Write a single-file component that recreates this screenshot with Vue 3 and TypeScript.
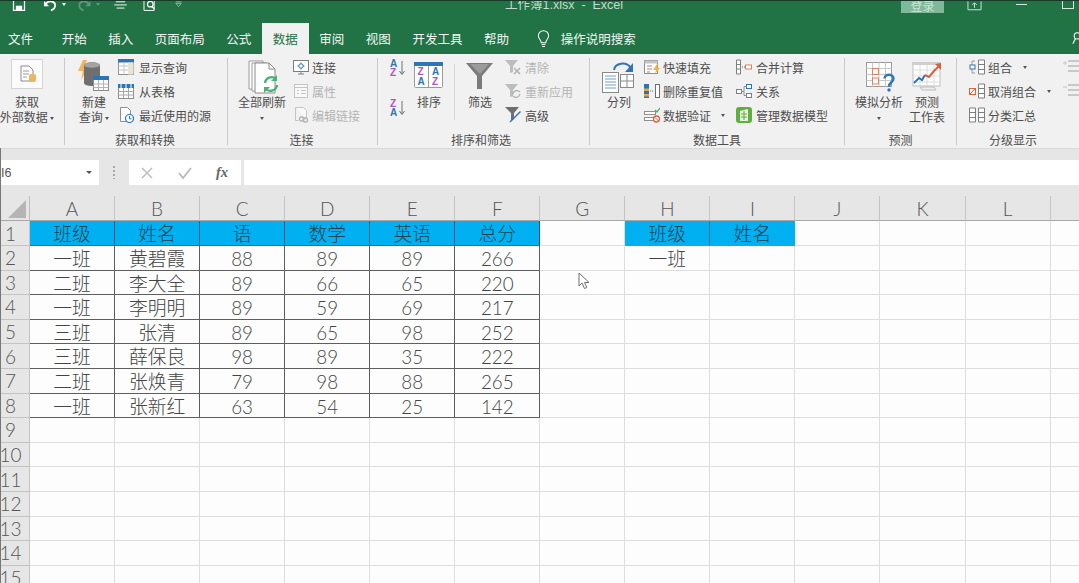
<script setup lang="ts">
const tabs = ['开始', '插入', '页面布局', '公式', '数据', '审阅', '视图', '开发工具', '帮助']
const cols = ['A', 'B', 'C', 'D', 'E', 'F', 'G', 'H', 'I', 'J', 'K', 'L', '']

const table: (string | number)[][] = [
  ['班级', '姓名', '语', '数学', '英语', '总分'],
  ['一班', '黄碧霞', 88, 89, 89, 266],
  ['二班', '李大全', 89, 66, 65, 220],
  ['一班', '李明明', 89, 59, 69, 217],
  ['三班', '张清', 89, 65, 98, 252],
  ['三班', '薛保良', 98, 89, 35, 222],
  ['二班', '张焕青', 79, 98, 88, 265],
  ['一班', '张新红', 63, 54, 25, 142],
]

interface Cell { text: string | number; cls: string }

function makeRow(r: number): Cell[] {
  const out: Cell[] = []
  for (let c = 0; c < 13; c++) {
    let text: string | number = ''
    const cls: string[] = []
    if (r < table.length && c < 6) {
      text = table[r][c]
      cls.push('dark')
      if (r === 0) cls.push('blue')
    }
    if (r === 0 && (c === 7 || c === 8)) {
      text = c === 7 ? '班级' : '姓名'
      cls.push('blue')
      if (c === 7) cls.push('blue-split')
    }
    if (r === 1 && c === 7) text = '一班'
    out.push({ text, cls: cls.join(' ') })
  }
  return out
}

const rows = Array.from({ length: 15 }, (_, i) => ({ n: i + 1, cells: makeRow(i) }))
</script>

<template>
  <div class="app">
    <header class="titlebar">
      <div class="qat">
        <svg class="q q-save" viewBox="0 0 16 14"><path d="M1 -3h11l3 3v12H1z" fill="none" stroke="#fff" stroke-width="1.6"/><rect x="4" y="6" width="8" height="6" fill="#fff"/></svg>
        <svg class="q q-undo" viewBox="0 0 16 14"><path d="M3 3c4-4 11-3 11 2 0 3-2 5-5 6" fill="none" stroke="#fff" stroke-width="2"/><path d="M1 0v6h6z" fill="#fff"/></svg>
        <span class="caret caret-w"></span>
        <svg class="q q-redo" viewBox="0 0 16 14"><path d="M13 3C9-1 2 0 2 5c0 3 2 5 5 6" fill="none" stroke="#5c9a7a" stroke-width="2"/><path d="M15 0v6H9z" fill="#5c9a7a"/></svg>
        <span class="caret caret-dim"></span>
        <svg class="q q-list" viewBox="0 0 16 14"><path d="M2 1h12M0 5h16M3 9h10" stroke="#fff" stroke-width="1.2"/></svg>
        <svg class="q q-prev" viewBox="0 0 16 14"><path d="M1-3v15h13V-3" fill="none" stroke="#fff" stroke-width="1.2"/><circle cx="9" cy="4" r="3.6" fill="none" stroke="#fff" stroke-width="1.6"/><path d="M11 7l3 3" stroke="#fff" stroke-width="1.8"/></svg>
        <svg class="q q-more" viewBox="0 0 10 10"><path d="M1 1h7" stroke="#9cc5ae"/><path d="M1 3h7L4.500 7z" fill="none" stroke="#9cc5ae"/></svg>
      </div>
      <div class="doc-title">工作簿1.xlsx&nbsp; - &nbsp;Excel</div>
      <div class="login">登录</div>
      <svg class="win win-ribbon" viewBox="0 0 16 10"><path d="M1 0v9h14V0" fill="none" stroke="#d5e6dc"/><path d="M8 7V2M5.500 4L8 1.500 10.500 4" fill="none" stroke="#d5e6dc"/></svg>
      <span class="win-min"></span>
      <span class="win-max"></span>
    </header>

    <nav class="tabs">
      <span class="tab tab-file">文件</span>
      <span v-for="t in tabs" :key="t" class="tab" :class="{ active: t === '数据' }">{{ t }}</span>
      <svg class="bulb" viewBox="0 0 14 18"><path d="M4.500 13c0-3-3-4-3-7.500a5.500 5.500 0 0 1 11 0C12.500 9 9.500 10 9.500 13z" fill="none" stroke="#fff" stroke-width="1.100"/><path d="M5 15h4M5.500 17h3" stroke="#fff" stroke-width="1.100"/></svg>
      <span class="tell">操作说明搜索</span>
      <svg class="person" viewBox="0 0 8 16"><circle cx="6" cy="5" r="3.500" fill="none" stroke="#fff" stroke-width="1.200"/><path d="M4 8l-3 6" stroke="#fff" stroke-width="1.200"/></svg>
    </nav>

    <section class="ribbon">
      <div class="group g1">
        <div class="body">
          <div class="big w54">
            <div class="big-ic">
              <svg viewBox="0 0 36 36"><rect x="2.500" y="1.500" width="31" height="29" fill="#fbfbfb" stroke="#d4d4d4"/><path d="M12 8h8l4 4v11H12z" fill="#fff" stroke="#8a8a8a"/><path d="M14 13h6M14 16h6M14 19h4" stroke="#9a9a9a"/><rect x="20" y="16" width="7" height="8" rx="2" fill="#eab662"/></svg>
            </div>
            <span>获取</span>
            <span>外部数据 <i class="caret"></i></span>
          </div>
        </div>
        <div class="label">&nbsp;</div>
      </div>
      <div class="sep"></div>

      <div class="group g2">
        <div class="body">
          <div class="big w46 ml6">
            <div class="big-ic">
              <svg viewBox="0 0 36 36"><path d="M7 2L2 13h5l-2 9 8-13H8l3-7z" fill="#efb45c"/><path d="M8 8c0-5 16-5 16 0v17c0 4-16 4-16 0z" fill="#6f6f6f"/><ellipse cx="16" cy="7" rx="8" ry="2.800" fill="#a3a3a3"/><rect x="17.500" y="18.500" width="15" height="14" fill="#fff" stroke="#8a8a8a"/><rect x="17" y="18" width="16" height="4" fill="#2e75b6"/><path d="M17.500 26h15M17.500 29.500h15M22.500 22v10M27.500 22v10" stroke="#b4b4b4"/></svg>
            </div>
            <span>新建</span>
            <span>查询 <i class="caret"></i></span>
          </div>
          <div class="col ml1">
            <div class="row gap5">
              <svg class="ic" viewBox="0 0 16 16"><rect x=".5" y=".5" width="15" height="15" fill="#fff" stroke="#8f8f8f"/><rect x="0" y="0" width="16" height="3.500" fill="#2e75b6"/><path d="M.5 7h15M.5 11h15M6 3.500v12" stroke="#c4c4c4"/><rect x="10" y="3.500" width="5.500" height="12" fill="#e9e4d8"/></svg>
              <span>显示查询</span>
            </div>
            <div class="row gap5">
              <svg class="ic" viewBox="0 0 16 16"><rect x=".5" y="1.500" width="15" height="14" fill="#fff" stroke="#8f8f8f"/><rect x="0" y="1" width="16" height="4" fill="#2e75b6"/><path d="M.5 8.500h15M.5 12h15M5.500 5v10M10.500 5v10" stroke="#a8a8a8"/><path d="M3 1v4M8 1v4M13 1v4" stroke="#fff"/></svg>
              <span>从表格</span>
            </div>
            <div class="row gap5">
              <svg class="ic" viewBox="0 0 16 16"><path d="M2.500.5h7l3 3v11h-10z" fill="#fff" stroke="#8f8f8f"/><circle cx="11.500" cy="11.500" r="4" fill="#fff" stroke="#2e75b6" stroke-width="1.200"/><path d="M11.500 9v2.800h2" fill="none" stroke="#2e75b6"/></svg>
              <span>最近使用的源</span>
            </div>
          </div>
        </div>
        <div class="label pr2">获取和转换</div>
      </div>
      <div class="sep"></div>

      <div class="group g3">
        <div class="body">
          <div class="big w50 ml9">
            <div class="big-ic">
              <svg viewBox="0 0 36 36"><path d="M5 3h14v28H5z" fill="#fff" stroke="#9a9a9a"/><path d="M8 5h14v28H8z" fill="#fff" stroke="#9a9a9a"/><path d="M11 5h14l6 6v24H11z" fill="#fff" stroke="#8a8a8a"/><path d="M25 5v6h6" fill="none" stroke="#8a8a8a"/><path d="M21 25a6.500 6.500 0 0 1 11-4" fill="none" stroke="#4caf78" stroke-width="2.400"/><path d="M33 17v6h-6z" fill="#4caf78"/><path d="M33 27a6.500 6.500 0 0 1-11 4" fill="none" stroke="#4caf78" stroke-width="2.400"/><path d="M20 35v-6h6z" fill="#4caf78"/></svg>
            </div>
            <span>全部刷新</span>
            <span><i class="caret"></i></span>
          </div>
          <div class="col ml6">
            <div class="row gap3">
              <svg class="ic" viewBox="0 0 16 16"><rect x=".5" y="1.500" width="15" height="11" fill="#fff" stroke="#7f7f7f"/><path d="M5 15h6M8 12.500V15" stroke="#7f7f7f"/><circle cx="8" cy="7" r="2.200" fill="#fff" stroke="#2e75b6"/><path d="M8 3.500v1.300M8 9.200v1.300M4.500 7h1.300M10.200 7h1.300" stroke="#2e75b6"/></svg>
              <span>连接</span>
            </div>
            <div class="row gap3 off">
              <svg class="ic" viewBox="0 0 16 16"><rect x="1.500" y="1.500" width="13" height="13" fill="#f8f8f8" stroke="#c4c4c4"/><path d="M1.500 4.500h13M4 7.500h2M8 7.500h5M4 10.500h2M8 10.500h5" stroke="#c4c4c4"/></svg>
              <span>属性</span>
            </div>
            <div class="row gap3 off">
              <svg class="ic" viewBox="0 0 16 16"><path d="M2.500.5h8l3 3v8" fill="#f8f8f8" stroke="#c4c4c4"/><path d="M2.500.5v13h3" fill="none" stroke="#c4c4c4"/><rect x="6.500" y="10" width="4.500" height="4" rx="2" fill="none" stroke="#b4b4b4" stroke-width="1.300"/><rect x="10" y="11" width="4.500" height="4" rx="2" fill="none" stroke="#b4b4b4" stroke-width="1.300"/></svg>
              <span>编辑链接</span>
            </div>
          </div>
        </div>
        <div class="label pr2">连接</div>
      </div>
      <div class="sep"></div>

      <div class="group g4">
        <div class="body">
          <div class="sort">
            <svg class="sort-ic" viewBox="0 0 16 20"><text x="0" y="9" class="az blue-t">A</text><text x="0" y="18" class="az purple-t">Z</text><path d="M12 3v13M9.500 13l2.500 3.500 2.500-3.500" fill="none" stroke="#707070"/></svg>
            <svg class="sort-ic" viewBox="0 0 16 20"><text x="0" y="9" class="az purple-t">Z</text><text x="0" y="18" class="az blue-t">A</text><path d="M12 3v13M9.500 13l2.500 3.500 2.500-3.500" fill="none" stroke="#707070"/></svg>
          </div>
          <div class="big w30 ml8">
            <div class="big-ic">
              <svg viewBox="0 0 30 36"><rect x=".5" y="4.500" width="28" height="25" rx="1" fill="#fff" stroke="#9a9a9a"/><rect x="0" y="4" width="29" height="4" fill="#2e75b6"/><path d="M14.500 8v21" stroke="#9a9a9a"/><text x="3.500" y="17" class="az2 purple-t">Z</text><text x="3.500" y="27" class="az2 blue-t">A</text><text x="18" y="17" class="az2 blue-t">A</text><text x="18" y="27" class="az2 purple-t">Z</text></svg>
            </div>
            <span>排序</span>
          </div>
          <div class="vline"></div>
          <div class="big w30 ml10">
            <div class="big-ic">
              <svg viewBox="0 0 30 36"><path d="M1 5h27L17 18v13l-5 0V18z" fill="#7b7b7b"/><path d="M5 6h19l-9 10z" fill="#9b9b9b"/></svg>
            </div>
            <span>筛选</span>
          </div>
          <div class="col ml10">
            <div class="row gap3 off">
              <svg class="ic w17" viewBox="0 0 17 16"><path d="M0 1h13L8 7v6l-3 1V7z" fill="#bdbdbd"/><path d="M9 9l6 6M15 9l-6 6" stroke="#b0b0b0" stroke-width="1.500"/></svg>
              <span>清除</span>
            </div>
            <div class="row gap3 off">
              <svg class="ic w17" viewBox="0 0 17 16"><path d="M0 1h13L8 7v6l-3 1V7z" fill="#bdbdbd"/><path d="M8 11a4 4 0 0 1 7-2M15 11a4 4 0 0 1-7 2" fill="none" stroke="#b0b0b0" stroke-width="1.300"/></svg>
              <span>重新应用</span>
            </div>
            <div class="row gap3">
              <svg class="ic w17" viewBox="0 0 17 16"><path d="M0 0h14L9 6v6L6 14V6z" fill="#6f6f6f"/><path d="M16 5L6 15l-1.500.500L5 14 15 4z" fill="#2e75b6"/></svg>
              <span>高级</span>
            </div>
          </div>
        </div>
        <div class="label pr5">排序和筛选</div>
      </div>
      <div class="sep"></div>

      <div class="group g5">
        <div class="body">
          <div class="big w34 ml12">
            <div class="big-ic">
              <svg viewBox="0 0 34 36"><rect x=".5" y="14.500" width="16" height="20" fill="#fff" stroke="#8a8a8a"/><path d="M3 18h11M3 21h11M3 24h11M3 27h11M3 30h11" stroke="#6f9fd0"/><rect x="18.500" y="16.500" width="13" height="13" fill="#fff" stroke="#8a8a8a"/><path d="M18.500 23h13M25 16.500v13" stroke="#8a8a8a"/><path d="M12 12c1-7 12-9 17-2" fill="none" stroke="#2e75b6" stroke-width="2"/><path d="M31 5v9h-8z" fill="#2e75b6"/></svg>
            </div>
            <span>分列</span>
          </div>
          <div class="col w92 ml8">
            <div class="row gap3">
              <svg class="ic" viewBox="0 0 16 16"><rect x=".5" y="1.500" width="13" height="13" fill="#fff" stroke="#8f8f8f"/><rect x=".5" y="1.500" width="13" height="3" fill="#c4c4c4"/><path d="M3 7h5M3 10h5M3 13h3" stroke="#a88" /><path d="M13 5l-4 6h3l-1 4 5-6h-3l1-4z" fill="#f0b44c"/></svg>
              <span>快速填充</span>
            </div>
            <div class="row gap3">
              <svg class="ic" viewBox="0 0 16 16"><rect x="0" y="1" width="5" height="14" fill="#2e75b6"/><rect x="0" y="5.500" width="5" height="2.500" fill="#e8a33d"/><rect x="0" y="11" width="5" height="2.500" fill="#e8a33d"/><rect x="11.500" y="1.500" width="4" height="13" fill="#fff" stroke="#6f6f6f"/><path d="M6 8h4" stroke="#2e75b6" stroke-dasharray="1 1"/></svg>
              <span>删除重复值</span>
            </div>
            <div class="row gap3">
              <svg class="ic" viewBox="0 0 16 16"><rect x=".5" y="4.500" width="11" height="3" fill="#fff" stroke="#8f8f8f"/><rect x=".5" y="10.500" width="9" height="3" fill="#fff" stroke="#8f8f8f"/><path d="M11 3l2 2 3-4" fill="none" stroke="#4caf78" stroke-width="1.300"/><circle cx="12.500" cy="12" r="3" fill="#fff" stroke="#e0603c" stroke-width="1.300"/><path d="M10.500 10l4 4" stroke="#e0603c"/></svg>
              <span>数据验证</span><i class="caret ml7"></i>
            </div>
          </div>
          <div class="col">
            <div class="row gap4">
              <svg class="ic" viewBox="0 0 16 16"><path d="M.5 1h4v14h-4zM.5 5.500h4M.5 10h4" fill="#fff" stroke="#7f7f7f"/><rect x="9.500" y="6" width="6" height="4" fill="#fff" stroke="#e0805c"/><path d="M6 8h3" stroke="#2e75b6" stroke-dasharray="1 1"/></svg>
              <span>合并计算</span>
            </div>
            <div class="row gap4">
              <svg class="ic" viewBox="0 0 16 16"><rect x=".5" y="6.500" width="5" height="4" fill="#fff" stroke="#7f7f7f"/><rect x="10.500" y="1.500" width="5" height="4" fill="#fff" stroke="#2e75b6"/><rect x="10.500" y="10.500" width="5" height="4" fill="#fff" stroke="#7f7f7f"/><path d="M5.500 8.500H8V3.500h2.500M8 8.500v4h2.500" fill="none" stroke="#8f8f8f"/></svg>
              <span>关系</span>
            </div>
            <div class="row gap4">
              <svg class="ic" viewBox="0 0 16 16"><rect x="0" y="0" width="16" height="16" rx="3" fill="#5faf3c"/><path d="M4 4l8-2v12H4z" fill="#e8f2de"/><path d="M5 7h6M5 10h6M8 4v9" stroke="#5faf3c"/></svg>
              <span>管理数据模型</span>
            </div>
          </div>
        </div>
        <div class="label">数据工具</div>
      </div>
      <div class="sep"></div>

      <div class="group g6">
        <div class="body">
          <div class="big w50 ml9">
            <div class="big-ic">
              <svg viewBox="0 0 36 36"><rect x="5.500" y="4.500" width="25" height="24" fill="#fff" stroke="#9a9a9a"/><path d="M5.500 10.500h25M5.500 16.500h25M5.500 22.500h25M11.500 4.500v24M18 4.500v24M24.500 4.500v24" stroke="#c8c8c8"/><rect x="11.500" y="10.500" width="6" height="6" fill="#fff" stroke="#e0805c"/><rect x="11.500" y="20" width="6" height="6" fill="#fff" stroke="#e0805c"/><path d="M23.500 20.500c0-5 9-5 9 0 0 4-4.500 3.500-4.500 8" fill="none" stroke="#2e75b6" stroke-width="2.400"/><circle cx="28" cy="32" r="1.700" fill="#2e75b6"/></svg>
            </div>
            <span>模拟分析</span>
            <span><i class="caret"></i></span>
          </div>
          <div class="big w38 ml4">
            <div class="big-ic">
              <svg viewBox="0 0 38 36"><rect x="5" y="5" width="27" height="23" fill="#fff" stroke="#bdbdbd"/><rect x="4" y="4" width="29" height="3" fill="#cfcfcf"/><path d="M5 12h27M5 18h27M5 24h27M12 7v21M19 7v21M26 7v21" stroke="#dcdcdc"/><path d="M6 25l5-5 3 2 3-5" fill="none" stroke="#2e75b6" stroke-width="2"/><path d="M17 17l4 2 5-6 5-5" fill="none" stroke="#d9603c" stroke-width="2"/><path d="M33 5v7l-6-6z" fill="#d9603c"/><path d="M12 29h14l2 3H14z" fill="#eee" stroke="#bdbdbd"/></svg>
            </div>
            <span>预测</span>
            <span>工作表</span>
          </div>
        </div>
        <div class="label">预测</div>
      </div>
      <div class="sep"></div>

      <div class="group g7">
        <div class="body">
          <div class="col outline ml12">
            <div class="row gap3">
              <svg class="ic" viewBox="0 0 16 16"><path d="M9.500 1h6v14h-6zM9.500 5.500h6M9.500 10.500h6" fill="#fff" stroke="#7f7f7f"/><path d="M3 2h3M3 14h3M3 2v12" fill="none" stroke="#9a9a9a"/><rect x="1" y="6" width="5" height="4" fill="#fff" stroke="#2e75b6"/></svg>
              <span>组合</span><i class="caret ml8"></i>
            </div>
            <div class="row gap3">
              <svg class="ic" viewBox="0 0 16 16"><path d="M9.500 1h6v14h-6zM9.500 5.500h6M9.500 10.500h6" fill="#fff" stroke="#7f7f7f"/><rect x=".5" y="5.500" width="6" height="6" fill="#fff" stroke="#e0603c"/><path d="M1 11l5-5" stroke="#e0603c"/></svg>
              <span>取消组合</span><i class="caret ml8"></i>
            </div>
            <div class="row gap3">
              <svg class="ic" viewBox="0 0 16 16"><path d="M.5 1h6v14h-6zM.5 5.500h6M.5 10.500h6M9.500 1h6v14h-6zM9.500 5.500h6M9.500 10.500h6" fill="#fff" stroke="#7f7f7f"/></svg>
              <span>分类汇总</span>
            </div>
          </div>
          <div class="col side">
            <div class="row off">
              <svg class="ic" viewBox="0 0 17 16"><path d="M6 2h11M6 7h11M6 12h11" stroke="#c8c8c8" stroke-width="2"/><path d="M1 4h4M3 2v4" stroke="#c8c8c8"/></svg>
            </div>
            <div class="row off">
              <svg class="ic" viewBox="0 0 17 16"><path d="M6 2h11M6 7h11M6 12h11" stroke="#c8c8c8" stroke-width="2"/><path d="M1 4h4" stroke="#c8c8c8"/></svg>
            </div>
          </div>
        </div>
        <div class="label label-g7">分级显示</div>
      </div>
    </section>

    <div class="lower">
      <div class="fbar">
        <div class="namebox"><span>I6</span><i class="caret caret-dark"></i></div>
        <div class="grip"></div>
        <div class="fbtns">
          <svg class="fb" viewBox="0 0 14 14"><path d="M2 2l10 10M12 2L2 12" stroke="#b9b9b9" stroke-width="1.400"/></svg>
          <svg class="fb" viewBox="0 0 14 14"><path d="M1 7l4 5 8-10" fill="none" stroke="#b9b9b9" stroke-width="1.800"/></svg>
          <span class="fx">fx</span>
        </div>
        <div class="finput"></div>
      </div>

      <div class="sheet">
        <div class="corner"><span class="tri"></span></div>
        <div v-for="(c, i) in cols" :key="i" class="colhead">{{ c }}</div>
        <div v-for="r in rows" :key="r.n" class="sheet-row">
          <div class="rowhead"><span>{{ r.n }}</span></div>
          <div v-for="(cell, j) in r.cells" :key="j" class="cell" :class="cell.cls">{{ cell.text }}</div>
        </div>
        <svg class="cursor" viewBox="0 0 12 18"><path d="M1 1v13l3-3 2.500 5.500 2.300-1L6.500 10.500H11z" fill="#fff" stroke="#6f6f6f"/></svg>
      </div>
    </div>
  </div>
</template>

<style scoped>
.app {
  position: relative;
  width: 1079px;
  height: 583px;
  overflow: hidden;
  display: flex;
  flex-direction: column;
  background: #fdfdfd;
  font-family: "Noto Sans CJK SC", "Noto Sans", sans-serif;
  font-size: 12px;
  color: #4e4e4e;
}

.titlebar {
  height: 23px;
  flex: none;
  display: flex;
  align-items: flex-start;
  background: #217346;
  border-top: 1px solid #17392a;
  box-sizing: border-box;
  overflow: hidden;
}
.qat { width: 505px; flex: none; display: flex; align-items: flex-start; }
.q { display: block; height: 11px; flex: none; }
.q-save { width: 14px; margin-left: 12px; }
.q-undo { width: 16px; margin-left: 16px; height: 12px; }
.q-redo { width: 15px; margin-left: 11px; height: 12px; }
.q-list { width: 15px; margin-left: 13px; margin-top: 0; }
.q-prev { width: 15px; margin-left: 14px; }
.q-more { width: 8px; height: 8px; margin-left: 18px; }
.caret-w { border-top-color: #fff !important; margin: 2px 0 0 4px; }
.caret-dim { border-top-color: #5c9a7a !important; margin: 2px 0 0 4px; }
.doc-title {
  width: 396px;
  flex: none;
  line-height: 9px;
  font-family: "Liberation Sans", "Noto Sans CJK SC", sans-serif;
  font-size: 12.5px;
  color: #c5dccf;
  white-space: nowrap;
}
.login {
  width: 43px;
  height: 12px;
  flex: none;
  background: #80b89b;
  color: #cfe3d7;
  text-align: center;
  line-height: 9px;
  font-size: 12px;
}
.win-ribbon { width: 15px; height: 10px; margin-left: 23px; flex: none; }
.win-min { width: 11px; height: 1px; background: #d5e6dc; margin: 3px 0 0 34px; flex: none; }
.win-max { width: 10px; height: 7px; border: 1px solid #d5e6dc; border-top: 0; margin-left: 35px; flex: none; }

.tabs {
  height: 31px;
  flex: none;
  display: flex;
  align-items: stretch;
  background: #217346;
  color: #f2f7f4;
  font-size: 12.5px;
  position: relative;
}
.tab { display: flex; align-items: center; padding: 0 10.75px; white-space: nowrap; }
.tab-file { padding: 0 18px 0 8px; margin-right: 0; }
.tab.active { background: #f1f1f1; color: #217346; }
.bulb { width: 13px; height: 18px; align-self: center; margin-left: 17px; }
.tell { align-self: center; margin-left: 11px; white-space: nowrap; }
.person { position: absolute; right: 0; top: 8px; width: 7px; height: 15px; }

.ribbon {
  height: 94px;
  flex: none;
  display: flex;
  background: #f1f1f1;
}
.sep { width: 1px; background: #c9c9c9; margin: 4px 0 3px; flex: none; }
.group { flex: none; display: flex; flex-direction: column; padding-top: 1px; box-sizing: border-box; }
.g1 { width: 64px; }
.g2 { width: 162px; }
.g3 { width: 149px; }
.g4 { width: 211px; }
.g5 { width: 254px; }
.g6 { width: 111px; }
.g7 { width: 122px; }
.body { height: 77px; display: flex; flex: none; }
.label { height: 16px; line-height: 15px; text-align: center; white-space: nowrap; }
.pr2 { padding-right: 2px; }
.pr5 { padding-right: 5px; }
.label-g7 { padding-right: 10px; }

.big { display: flex; flex-direction: column; align-items: center; flex: none; line-height: 15px; white-space: nowrap; }
.big-ic { height: 38.500px; flex: none; }
.big-ic svg { display: block; height: 36px; margin-top: 3px; }
.w54 { width: 54px; }
.w46 { width: 46px; }
.w50 { width: 50px; }
.w30 { width: 30px; }
.w34 { width: 34px; }
.w38 { width: 38px; }
.w92 { width: 92px; flex: none; }
.ml1 { margin-left: 1px; }
.ml4 { margin-left: 4px; }
.ml6 { margin-left: 6px; }
.ml7 { margin-left: 7px; }
.ml8 { margin-left: 8px; }
.ml9 { margin-left: 9px; }
.ml10 { margin-left: 10px; }
.ml12 { margin-left: 12px; }

.col { display: flex; flex-direction: column; flex: none; }
.row { height: 24px; display: flex; align-items: center; white-space: nowrap; }
.gap3 { gap: 3px; }
.gap4 { gap: 4px; }
.gap5 { gap: 5px; }
.off { color: #b4b4b4; }
.ic { width: 16px; height: 16px; flex: none; display: block; }
.w17 { width: 17px; }
.outline { width: 93px; }
.side .ic { width: 17px; }

.sort { margin: 3px 0 0 12px; width: 16px; flex: none; display: flex; flex-direction: column; gap: 20px; }
.sort-ic { display: block; width: 16px; height: 20px; }
.az { font: bold 10px "Liberation Sans", sans-serif; }
.az2 { font: bold 10px "Liberation Sans", sans-serif; }
.blue-t { fill: #2e75b6; }
.purple-t { fill: #a659c4; }
.vline { width: 1px; height: 56px; background: #d6d6d6; margin: 9px 0 0 10px; flex: none; }

.caret {
  display: inline-block;
  width: 0;
  height: 0;
  border-left: 2.500px solid transparent;
  border-right: 2.500px solid transparent;
  border-top: 3px solid #555;
  vertical-align: middle;
  flex: none;
}

.lower { flex: 1; min-height: 0; display: flex; flex-direction: column; border-left: 1px solid #777; }
.fbar {
  height: 48px;
  flex: none;
  display: flex;
  background: #e6e6e6;
  border-top: 1px solid #d8d8d8;
  box-sizing: border-box;
  padding-top: 11px;
  padding-bottom: 11px;
}
.namebox {
  width: 98px;
  background: #fff;
  display: flex;
  align-items: center;
  justify-content: space-between;
  padding: 0 7px 0 0;
  box-sizing: border-box;
  color: #555;
  font-family: "Liberation Sans", sans-serif;
  font-size: 12.500px;
  flex: none;
}
.namebox .caret { border-left-width: 3px; border-right-width: 3px; border-top-width: 3.500px; }
.grip {
  width: 2px;
  margin: 6px 0 6px 14px;
  flex: none;
  background: repeating-linear-gradient(#a8a8a8 0 2px, transparent 2px 4px);
}
.fbtns {
  width: 112px;
  margin-left: 14px;
  background: #fff;
  display: flex;
  align-items: center;
  flex: none;
  padding-left: 11px;
  box-sizing: border-box;
  gap: 24px;
}
.fb { width: 14px; height: 14px; display: block; }
.fx { font: italic bold 14.500px "Liberation Serif", serif; color: #666; }
.finput { flex: 1; margin-left: 3px; background: #fff; }

.sheet {
  position: relative;
  display: grid;
  grid-template-columns: 29px repeat(13, 85.050px);
  grid-template-rows: 25.400px repeat(15, 24.600px);
  font-family: Lato, "Noto Sans CJK SC", sans-serif;
  font-size: 18.800px;
  font-weight: 300;
  color: #444;
}
.sheet-row { display: contents; }
.corner, .colhead, .rowhead { background: #e6e6e6; box-sizing: border-box; }
.corner { border-right: 1px solid #bdbdbd; border-bottom: 1px solid #a8a8a8; display: flex; padding: 4px 0 0 7px; }
.tri { width: 18px; height: 18px; background: #b5b5b5; clip-path: polygon(100% 0, 100% 100%, 0 100%); }
.colhead {
  border-right: 1px solid #c4c4c4;
  border-bottom: 1px solid #a8a8a8;
  text-align: center;
  line-height: 25px;
  font-size: 19px;
  color: #555;
}
.rowhead {
  border-right: 1px solid #c4c4c4;
  border-bottom: 1px solid #c4c4c4;
  padding-right: 9px;
  display: flex;
  justify-content: center;
  align-items: center;
  font-size: 19px;
  color: #555;
}
.cell {
  box-sizing: border-box;
  border-right: 1px solid #dcdfde;
  border-bottom: 1px solid #dcdfde;
  text-align: center;
  line-height: 25px;
  white-space: nowrap;
}
.dark { border-right-color: #5e5e5e; border-bottom-color: #5e5e5e; }
.blue { background: #00b0f0; color: #24404f; border-bottom-color: #3a6f8e; border-right-color: #14597f; }
.blue:not(.dark) { border-right-color: #00b0f0; border-bottom-color: #00b0f0; }
.blue.blue-split { border-right-color: #2f6f9b; }
.cursor { position: absolute; left: 577px; top: 76px; width: 12px; height: 18px; }
</style>

<style>
html, body { margin: 0; padding: 0; background: #fff; }
</style>
